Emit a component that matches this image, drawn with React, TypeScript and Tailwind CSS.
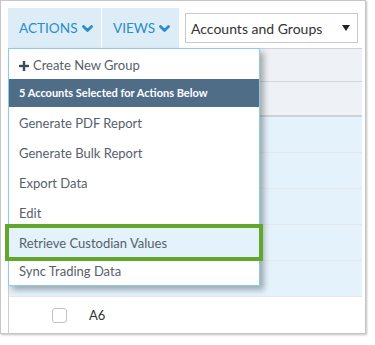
import React from "react";

const Chevron = () => (
  <svg width="11" height="8" viewBox="0 0 11 8" className="ml-[4px] mt-[2px]">
    <polyline points="1.5,1.5 5.5,5.5 9.5,1.5" fill="none" stroke="#2a8ccb" strokeWidth="2.8" strokeLinecap="round" strokeLinejoin="round" />
  </svg>
);

const items = [
  "Generate PDF Report",
  "Generate Bulk Report",
  "Export Data",
  "Edit",
  "Retrieve Custodian Values",
  "Sync Trading Data",
];

export default function App() {
  return (
    <div className="w-[375px] h-[345px] bg-white" style={{ fontFamily: 'Lato, "Open Sans", sans-serif' }}>
      <div className="relative w-[366px] h-[334px] border border-[#c6c6c6] bg-white shadow-[1px_1px_2px_rgba(0,0,0,0.25)] pl-[7px] pt-[7px] overflow-hidden">
        <div className="relative w-[354px] h-[326px]">
          {/* toolbar */}
          <div className="flex h-[41px] border-b border-[#cdd2d7] bg-white">
            <div className="flex items-center w-[93px] h-[40px] bg-[#dcedf8] pl-[11px] text-[13.6px] text-[#2a8ccb]">
              ACTIONS
              <Chevron />
            </div>
            <div className="w-[1px] h-[40px] bg-white" />
            <div className="flex items-center w-[77px] h-[40px] bg-[#dcedf8] pl-[11px] text-[13.6px] text-[#2a8ccb]">
              VIEWS
              <Chevron />
            </div>
            <div className="ml-[6px] mt-[5px] flex items-center justify-between w-[173px] h-[30px] border border-[#c8c8c8] bg-white pl-[5px] pr-[7px] text-[14px] text-[#333]">
              <span>Accounts and Groups</span>
              <svg width="8" height="6" viewBox="0 0 8 6">
                <polygon points="0,0 8,0 4,6" fill="#222" />
              </svg>
            </div>
          </div>
          {/* grid */}
          <div className="border-l border-[#cfcfcf]">
            <div className="h-[33px] bg-[#eef2f6] border-b border-[#d3d7db]" />
            <div className="h-[35px] bg-[#eef2f6] border-b-2 border-[#cfd3d7]" />
            {[0, 1, 2, 3, 4].map((i) => (
              <div key={i} className="h-[36px] bg-[#e3f2fb] border-b border-[#e4e8eb]" />
            ))}
            <div className="flex items-center h-[37px] bg-white">
              <div className="ml-[43px] w-[15px] h-[15px] rounded-[3px] border border-[#c2c2c2] bg-white" />
              <span className="ml-[22px] text-[13px] text-[#333]">A6</span>
            </div>
          </div>
          {/* dropdown menu */}
          <div className="absolute left-0 top-[40px] w-[252px] border border-[#8ccbea] bg-white shadow-[4px_4px_6px_rgba(0,0,0,0.3)]">
            <div className="flex items-center h-[30px] pt-[4px] pl-[10px] text-[13px] text-[#56606b]">
              <svg width="10" height="10" viewBox="0 0 10 10" className="mr-[4px]">
                <rect x="3.8" y="0" width="2.4" height="10" fill="#3e4a56" />
                <rect x="0" y="3.8" width="10" height="2.4" fill="#3e4a56" />
              </svg>
              Create New Group
            </div>
            <div className="flex items-center h-[28px] pl-[10px] bg-[#506d87] text-[11px] font-bold text-white">
              5 Accounts Selected for Actions Below
            </div>
            {items.map((t, i) => (
              <div
                key={t}
                className={`flex items-center ${i === 5 ? "h-[28px] pt-[2px]" : "h-[30px] pt-[4px]"} pl-[10px] text-[13px] text-[#56606b] ${i === 4 ? "bg-[#e3f2fb]" : ""}`}
              >
                {t}
              </div>
            ))}
          </div>
          {/* green highlight box */}
          <div className="absolute left-[-3px] top-[216px] w-[258px] h-[37px] border-[4px] border-[#62a62b]" />
        </div>
      </div>
    </div>
  );
}
